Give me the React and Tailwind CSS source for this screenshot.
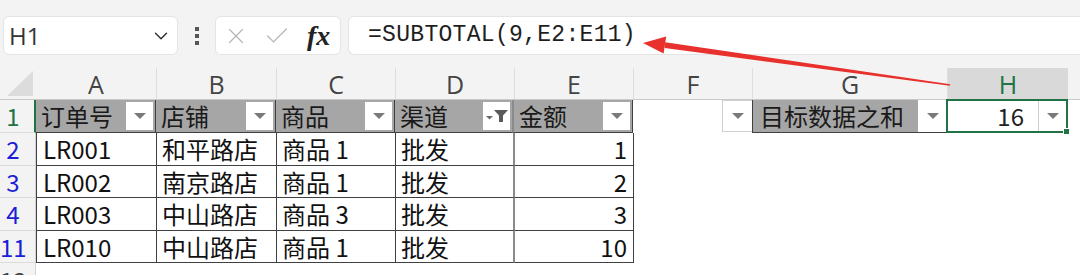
import React from 'react';
import { ChevronDown, X, Check } from 'lucide-react';

const cols = [
  { key: 'A', w: 'w-[121px]' },
  { key: 'B', w: 'w-[120px]' },
  { key: 'C', w: 'w-[119px]' },
  { key: 'D', w: 'w-[119px]' },
  { key: 'E', w: 'w-[119px]' },
  { key: 'F', w: 'w-[119px]' },
  { key: 'G', w: 'w-[195px]' },
  { key: 'H', w: 'w-[120px]' },
];

const rows = [
  { n: '2', h: 'h-[33px]', id: 'LR001', shop: '和平路店', item: '商品 1', ch: '批发', amt: '1' },
  { n: '3', h: 'h-[32px]', id: 'LR002', shop: '南京路店', item: '商品 1', ch: '批发', amt: '2' },
  { n: '4', h: 'h-[33px]', id: 'LR003', shop: '中山路店', item: '商品 3', ch: '批发', amt: '3' },
  { n: '11', h: 'h-[32px]', id: 'LR010', shop: '中山路店', item: '商品 1', ch: '批发', amt: '10' },
];

function Tri() {
  return <div className="w-0 h-0 border-l-[6px] border-r-[6px] border-t-[6px] border-l-transparent border-r-transparent border-t-[#7a7a7a]"></div>;
}

function DropBtn({ filter, className = '' }) {
  return (
    <div className={`w-[27px] h-[28px] bg-white flex items-center justify-center shrink-0 ${className}`}>
      {filter ? (
        <svg width="24" height="14" viewBox="0 0 24 14">
          <polygon points="1,7 8,7 4.5,10.5" fill="#6a6a6a" />
          <polygon points="9,1 23,1 18,6.5 18,13 14,13 14,6.5" fill="#5a5a5a" />
        </svg>
      ) : <Tri />}
    </div>
  );
}

function HeadCell({ w, text }) {
  return (
    <div className={`${w} h-full bg-[#a6a6a6] flex items-center justify-between pl-[5px] pr-[2px] border-r border-r-[#404040] border-b border-b-[#404040]`}>
      <span className="text-[#1a1a1a]">{text}</span>
      <DropBtn />
    </div>
  );
}

export default function App() {
  return (
    <div className="relative w-[1080px] h-[275px] overflow-hidden bg-white text-[24px] leading-none" style={{ fontFamily: '"Noto Sans CJK SC", "Noto Sans", sans-serif' }}>
      {/* toolbar */}
      <div className="h-[68px] bg-[#f3f3f3] flex items-start pt-[16px] pl-[3px]">
        <div className="w-[175px] h-[39px] bg-white rounded-[6px] border border-[#e4e4e4] flex items-center justify-between pl-[5px] pr-[5px]">
          <span className="text-[#333]" style={{ fontFamily: '"Open Sans", sans-serif' }}>H1</span>
          <ChevronDown size={22} strokeWidth={1.6} className="text-[#333]" />
        </div>
        <div className="w-[37px] h-[39px] flex flex-col items-center justify-center gap-[3px]">
          <div className="w-[4px] h-[4px] bg-[#555]"></div>
          <div className="w-[4px] h-[4px] bg-[#555]"></div>
          <div className="w-[4px] h-[4px] bg-[#555]"></div>
        </div>
        <div className="w-[126px] h-[39px] bg-white rounded-[6px] border border-[#e4e4e4] flex items-center pl-[7px] gap-[14px]">
          <X size={26} strokeWidth={1.1} className="text-[#b5b5b5]" />
          <Check size={28} strokeWidth={1.1} className="text-[#b5b5b5]" />
          <span className="italic font-bold text-[#222] text-[28px] ml-[2px]" style={{ fontFamily: '"Liberation Serif", serif' }}>fx</span>
        </div>
        <div className="ml-[7px] flex-1 h-[39px] bg-white rounded-l-[6px] border border-r-0 border-[#e4e4e4] flex items-center pl-[19px]">
          <span className="text-[#1e1e1e] text-[23px] tracking-[0.3px]" style={{ fontFamily: '"Liberation Mono", monospace' }}>=SUBTOTAL(9,E2:E11)</span>
        </div>
      </div>

      {/* column headers */}
      <div className="h-[32px] flex bg-[#f3f3f3] border-b border-[#c9c9c9]">
        <div className="w-[36px] h-full flex items-end justify-end pr-[3px] pb-[3px]">
          <svg width="26" height="25" viewBox="0 0 26 25">
            <polygon points="26,0 26,25 0,25" fill="#dcdcdc" />
          </svg>
        </div>
        {cols.map((c, i) => (
          <div key={c.key} className={`${c.w} h-full flex items-center justify-center ${c.key === 'H' ? 'bg-[#d9d9d9] text-[#217346]' : 'text-[#444]'} ${i < cols.length - 1 ? 'border-r border-[#dedede]' : ''}`}
            style={{ fontFamily: '"Open Sans", sans-serif' }}>
            <span className="text-[25px] pt-[2px]">{c.key}</span>
          </div>
        ))}
      </div>

      {/* row 1 */}
      <div className="h-[33px] flex">
        <div className="w-[36px] h-full bg-[#f3f3f3] border-r-2 border-[#217346] border-b border-b-[#dcdcdc] flex items-center">
          <span className="w-[26px] text-center text-[#217346]">1</span>
        </div>
        <HeadCell w="w-[120px]" text="订单号" />
        <HeadCell w="w-[120px]" text="店铺" />
        <HeadCell w="w-[119px]" text="商品" />
        <div className="w-[119px] h-full bg-[#a6a6a6] flex items-center justify-between pl-[5px] pr-[2px] border-r-2 border-r-[#8a8a8a] border-b border-b-[#404040]">
          <span className="text-[#1a1a1a]">渠道</span>
          <DropBtn filter />
        </div>
        <HeadCell w="w-[119px]" text="金额" />
        <div className="w-[119px] h-full flex items-start justify-end">
          <div className="w-[30px] h-[32px] bg-white border border-r-0 border-[#cfcfcf] flex items-center justify-center"><Tri /></div>
        </div>
        <div className="w-[195px] h-full flex border-l border-b border-[#404040]">
          <div className="flex-1 bg-[#a6a6a6] flex items-center pl-[7px] text-[#1a1a1a]">目标数据之和</div>
          <DropBtn className="h-full w-[29px]" />
        </div>
        <div className="relative w-[122px] -ml-[1px] h-[34px] -mt-[1px] border-2 border-[#217346] flex items-center justify-end">
          <span className="text-[#222] pr-[14px]">16</span>
          <div className="w-[28px] h-[30px] border-l border-[#cfcfcf] flex items-center justify-center"><Tri /></div>
          <div className="absolute -right-[4px] -bottom-[4px] w-[7px] h-[7px] bg-[#217346] border border-white"></div>
        </div>
      </div>

      {/* data rows */}
      {rows.map(r => (
        <div key={r.n} className={`${r.h} flex`}>
          <div className="w-[36px] h-full bg-[#f3f3f3] border-r border-[#d4d4d4] border-b border-b-[#dcdcdc] flex items-center">
            <span className="w-[26px] text-center text-[#1d1dd6]">{r.n}</span>
          </div>
          <div className="w-[121px] h-full border-l border-r border-b border-[#404040] flex items-center pl-[6px] text-[#111]">{r.id}</div>
          <div className="w-[120px] h-full border-r border-b border-[#404040] flex items-center pl-[5px] text-[#111]">{r.shop}</div>
          <div className="w-[119px] h-full border-r border-b border-[#404040] flex items-center pl-[5px] text-[#111]">{r.item}</div>
          <div className="w-[119px] h-full border-r-2 border-r-[#8a8a8a] border-b border-b-[#404040] flex items-center pl-[5px] text-[#111]">{r.ch}</div>
          <div className="w-[119px] h-full border-r border-b border-[#404040] flex items-center justify-end pr-[6px] text-[#111]">{r.amt}</div>
        </div>
      ))}

      {/* row 12, cut by the window edge */}
      <div className="h-[33px] flex">
        <div className="w-[36px] h-full bg-[#f3f3f3] border-r border-[#d4d4d4] flex items-center">
          <span className="w-[26px] text-center text-[#444]">12</span>
        </div>
      </div>

      {/* red arrow */}
      <svg className="absolute left-0 top-0 pointer-events-none" width="1080" height="275" viewBox="0 0 1080 275">
        <polygon points="643,43 663.6,53.6 666.2,36.6" fill="#e8302c" />
        <polygon points="664.6,48 665.2,42.2 950.2,84.3 949.8,85.7" fill="#e8302c" />
      </svg>
    </div>
  );
}
